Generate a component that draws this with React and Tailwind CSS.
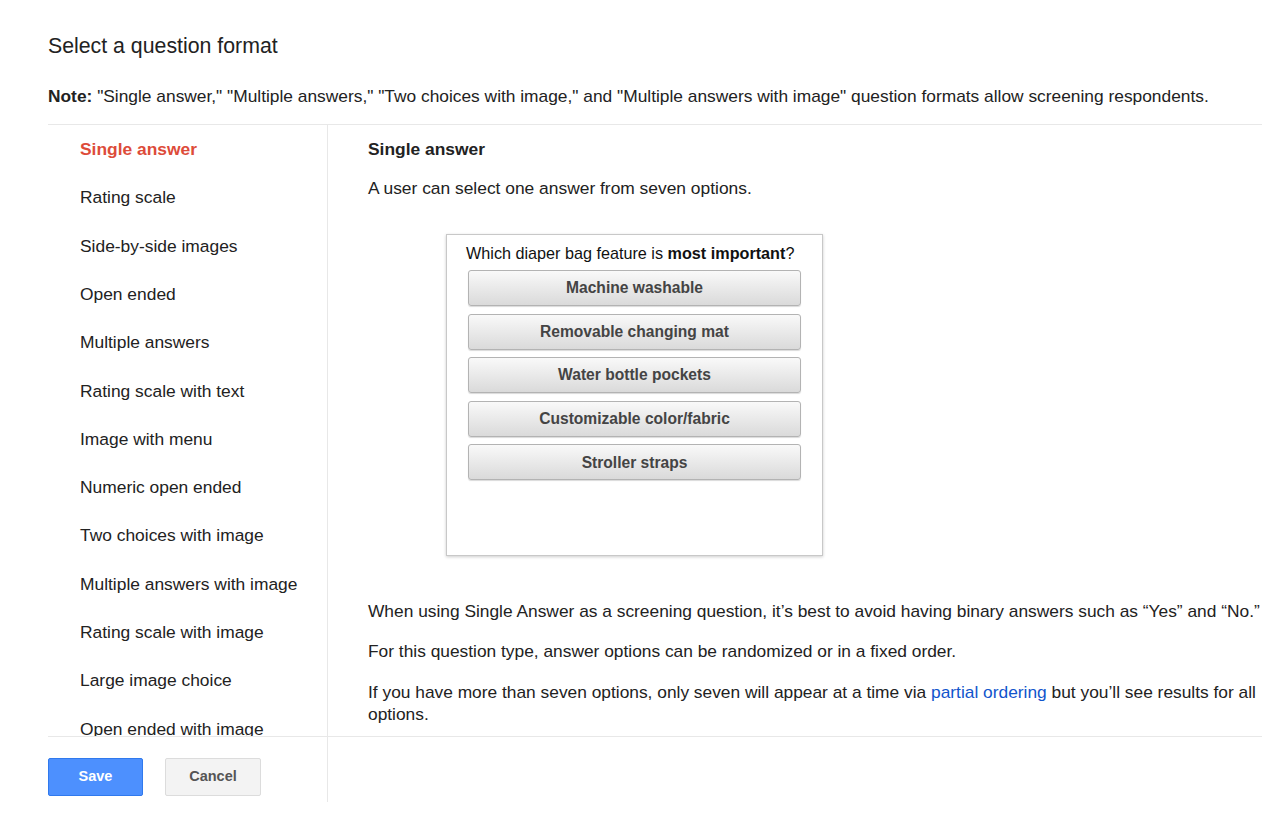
import React from "react";

const items = [
  "Single answer",
  "Rating scale",
  "Side-by-side images",
  "Open ended",
  "Multiple answers",
  "Rating scale with text",
  "Image with menu",
  "Numeric open ended",
  "Two choices with image",
  "Multiple answers with image",
  "Rating scale with image",
  "Large image choice",
  "Open ended with image",
];

const options = [
  "Machine washable",
  "Removable changing mat",
  "Water bottle pockets",
  "Customizable color/fabric",
  "Stroller straps",
];

export default function App() {
  return (
    <div
      className="w-[1279px] h-[823px] bg-white text-[#222] overflow-hidden"
      style={{ fontFamily: '"Liberation Sans", Arial, sans-serif' }}
    >
      <div className="pl-[48px] pr-[17px]">
        <h1 className="pt-[32px] text-[21.3px] leading-[28px] font-normal">
          Select a question format
        </h1>
        <p className="mt-[25px] mb-[17px] text-[17.35px] leading-[22px] whitespace-nowrap">
          <span className="font-bold">Note:</span> "Single answer," "Multiple answers," "Two choices with image," and "Multiple answers with image" question formats allow screening respondents.
        </p>
        <div className="border-t border-[#e8e8e8]">
          <div className="flex h-[612px] border-b border-[#e8e8e8]">
            <div className="w-[280px] shrink-0 border-r border-[#e8e8e8] overflow-hidden">
              <ul className="pl-[32px]">
                {items.map((it, i) => (
                  <li
                    key={it}
                    className={
                      "h-[48.3px] flex items-center text-[17.4px] whitespace-nowrap " +
                      (i === 0 ? "text-[#dd4b39] font-bold" : "text-[#222]")
                    }
                  >
                    {it}
                  </li>
                ))}
              </ul>
            </div>
            <div className="flex-1 pl-[40px] overflow-hidden">
              <h2 className="pt-[12px] text-[17.4px] leading-[24px] font-bold">Single answer</h2>
              <p className="mt-[15px] text-[17.4px] leading-[24px]">
                A user can select one answer from seven options.
              </p>
              <div className="mt-[34px] ml-[78px] w-[377px] h-[322px] border border-[#c8c8c8] shadow-[0_1px_3px_rgba(0,0,0,0.2)] bg-white">
                <p className="pt-[8px] pl-[19px] text-[16.2px] leading-[20px] text-[#111] whitespace-nowrap">
                  Which diaper bag feature is <span className="font-bold">most important</span>?
                </p>
                <div className="mt-[7px] pl-[21px] flex flex-col gap-[7.6px]">
                  {options.map((o) => (
                    <div
                      key={o}
                      className="w-[333px] h-[36px] flex items-center justify-center rounded-[3px] border border-[#b3b3b3] bg-gradient-to-b from-[#f9f9f9] to-[#dadada] shadow-[0_1px_1px_rgba(0,0,0,0.15)] text-[15.6px] font-bold text-[#444]"
                    >
                      {o}
                    </div>
                  ))}
                </div>
              </div>
              <div className="mt-[44px] text-[17.35px] leading-[22px]">
                <p className="whitespace-nowrap">
                  When using Single Answer as a screening question, it’s best to avoid having binary answers such as “Yes” and “No.”
                </p>
                <p className="mt-[18px]">
                  For this question type, answer options can be randomized or in a fixed order.
                </p>
                <p className="mt-[19px]">
                  If you have more than seven options, only seven will appear at a time via{" "}
                  <a className="text-[#1155cc]">partial ordering</a> but you’ll see results for all options.
                </p>
              </div>
            </div>
          </div>
          <div className="flex h-[65px]">
            <div className="w-[280px] shrink-0 border-r border-[#e8e8e8] pt-[21px] flex gap-[22px] items-start">
              <button className="w-[95px] h-[38px] rounded-[2px] border border-[#3079ed] bg-[#4d90fe] text-white text-[14.5px] font-bold">
                Save
              </button>
              <button className="w-[96px] h-[38px] rounded-[2px] border border-[#dcdcdc] bg-[#f3f3f3] text-[#555] text-[14.5px] font-bold">
                Cancel
              </button>
            </div>
            <div className="flex-1" />
          </div>
        </div>
      </div>
    </div>
  );
}
